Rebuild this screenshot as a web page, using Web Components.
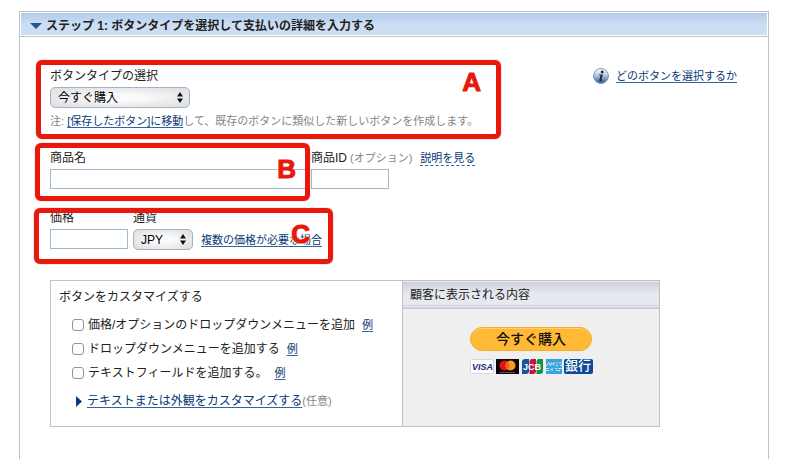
<!DOCTYPE html>
<html lang="ja">
<head>
<meta charset="utf-8">
<title>ボタンの作成</title>
<style>
    body {
        margin: 0;
        background: #fff;
        color: #222;
        font: 12px/16px "Liberation Sans", "Noto Sans CJK JP", sans-serif;
    }
</style>
</head>
<body>
<step-panel heading="ステップ 1: ボタンタイプを選択して支払いの詳細を入力する">
    <field-row mark="A" style="--mark-x:-14px; --mark-y:-8px; --mark-w:465px; --mark-h:79px; --letter-x:15px; --letter-y:5px">
        <select-field label="ボタンタイプの選択" options="今すぐ購入,カートに追加,寄付,購読" style="--width:140px">
            <note-text slot="note">注: <text-link>[保存したボタン]に移動</text-link>して、既存のボタンに類似した新しいボタンを作成します。</note-text>
        </select-field>
        <help-link slot="end">どのボタンを選択するか</help-link>
    </field-row>

    <field-row mark="B" style="--mark-x:-15px; --mark-y:-7px; --mark-w:275px; --mark-h:58px; --letter-x:9px; --letter-y:9px">
        <text-field label="商品名" style="--width:256px"></text-field>
        <text-field label="商品ID" style="--width:78px">
            <note-text slot="extra">(オプション)</note-text>
            <text-link slot="extra" dashed>説明を見る</text-link>
        </text-field>
    </field-row>

    <field-row mark="C" style="--mark-x:-16px; --mark-y:-2px; --mark-w:299px; --mark-h:56px; --letter-x:18px; --letter-y:9px">
        <text-field label="価格" style="--width:78px"></text-field>
        <select-field label="通貨" options="JPY,USD,EUR" style="--width:60px"></select-field>
        <text-link class="beside">複数の価格が必要な場合</text-link>
    </field-row>

    <customize-box heading="ボタンをカスタマイズする">
        <check-option label="価格/オプションのドロップダウンメニューを追加"></check-option>
        <check-option label="ドロップダウンメニューを追加する"></check-option>
        <check-option label="テキストフィールドを追加する。"></check-option>
        <button-preview slot="preview" heading="顧客に表示される内容"></button-preview>
    </customize-box>
</step-panel>

<script>
// every element gets its markup through here
function define(name, render) {
    customElements.define(name, class extends HTMLElement {
        constructor() {
            super();
            this.attachShadow({ mode: 'open' });
            const template = document.createElement('template');
            // trimmed, so inline elements leave no space behind them
            template.innerHTML = render(this).trim();
            this.shadowRoot.appendChild(template.content.cloneNode(true));
        }
    });
}

define('text-link', () => `
    <style>
        :host { display: inline; font-size: 11px; }
        a {
            color: #083772;
            text-decoration: underline 1px #2f65a3;
            text-underline-offset: 2px;
            text-decoration-skip-ink: none;
        }
        :host([dashed]) a { text-decoration-style: dashed; text-underline-offset: 3px; }
        :host([large]) { font-size: 12px; }
    </style><a href="#"><slot></slot></a>
`);

define('note-text', () => `
    <style>
        :host { display: inline; color: #858585; font-size: 11px; }
    </style><slot></slot>
`);

define('help-link', () => `
    <style>
        :host { display: flex; align-items: center; gap: 7px; }
        svg { display: block; }
    </style>
    <svg width="16" height="16" viewBox="0 0 16 16" aria-hidden="true">
        <defs>
            <linearGradient id="ball" x1="0" y1="0" x2="0" y2="1">
                <stop offset="0" stop-color="#fff"/>
                <stop offset=".45" stop-color="#b9cce0"/>
                <stop offset="1" stop-color="#2a5587"/>
            </linearGradient>
        </defs>
        <circle cx="8" cy="8" r="7.5" fill="url(#ball)" stroke="#7f9dbd"/>
        <circle cx="9.2" cy="4" r="1.4" fill="#1c2836"/>
        <path d="M6 6.400h3.900L8.500 11.600q-.1.700 1.200.1l-.2.700q-3.400 1.800-3.100-.5L7.400 7.300H5.800z" fill="#1c2836"/>
    </svg>
    <text-link><slot></slot></text-link>
`);

define('text-field', el => `
    <style>
        :host { display: flex; flex-direction: column; gap: 3px; width: var(--width); }
        .caption { display: flex; gap: 3px; white-space: nowrap; }
        ::slotted(text-link) { margin-left: 5px; }
        input {
            box-sizing: border-box;
            width: 100%;
            height: 20px;
            margin: 0;
            padding: 2px 4px;
            border: 1px solid #a0b8d0;
            border-radius: 0;
            background: #fff;
            font: inherit;
        }
    </style>
    <div class="caption"><label for="field">${el.getAttribute('label')}</label><slot name="extra"></slot></div>
    <input id="field" type="text">
`);

define('select-field', el => `
    <style>
        :host { display: flex; flex-direction: column; gap: 3px; }
        .control { display: grid; width: var(--width); }
        .control > * { grid-area: 1 / 1; }
        select {
            appearance: none;
            box-sizing: border-box;
            width: 100%;
            height: 21px;
            margin: 0;
            padding: 1px 18px 0 7px;
            border: 1px solid #9db4cd;
            border-radius: 5px;
            background: radial-gradient(ellipse at center, #fbfbfb 20%, #dcdcdc 100%);
            color: #000;
            font: 12px/18px "Liberation Sans", "Noto Sans CJK JP", sans-serif;
        }
        svg { place-self: center end; margin-right: 7px; pointer-events: none; }
        .note { margin-top: 2px; }
    </style>
    <label for="choice">${el.getAttribute('label')}</label>
    <div class="control">
        <select id="choice">
            ${el.getAttribute('options').split(',').map(o => `<option>${o}</option>`).join('')}
        </select>
        <svg width="6" height="11" viewBox="0 0 6 11" aria-hidden="true">
            <path d="M0 4.500L3 0l3 4.500zM0 6.500h6L3 11z" fill="#111"/>
        </svg>
    </div>
    <div class="note"><slot name="note"></slot></div>
`);

define('field-row', el => `
    <style>
        :host { display: flex; justify-content: space-between; position: relative; }
        .fields { display: flex; align-items: flex-start; gap: 5px; }
        ::slotted(.beside) { margin: 22px 0 0 3px; }
        ::slotted(help-link) { align-self: flex-start; }
        .mark {
            box-sizing: border-box;
            position: absolute;
            left: var(--mark-x);
            top: var(--mark-y);
            width: var(--mark-w);
            height: var(--mark-h);
            padding: var(--letter-y) var(--letter-x) 0 0;
            border: 5px solid #e8190c;
            border-radius: 6px;
            box-shadow: 0 0 1px #e8190c;
            color: #e8190c;
            font: bold 26px/24px "Liberation Sans", sans-serif;
            -webkit-text-stroke: 1px #e8190c;
            text-align: right;
            text-shadow: 0 0 2px #fff, 0 0 2px #fff, 0 0 2px #fff, 0 0 2px #fff;
            pointer-events: none;
        }
    </style>
    <div class="fields"><slot></slot></div>
    <slot name="end"></slot>
    <div class="mark">${el.getAttribute('mark')}</div>
`);

define('check-option', el => `
    <style>
        :host { display: flex; align-items: center; height: 24px; }
        input {
            appearance: none;
            box-sizing: border-box;
            width: 12px;
            height: 12px;
            margin: 0 4px 0 0;
            border: 1px solid #949494;
            border-radius: 3px;
            background: #fff;
        }
        input:checked { background: #2f65a3; }
        text-link { margin-left: 7px; }
    </style>
    <input id="check" type="checkbox">
    <label for="check">${el.getAttribute('label')}</label>
    <text-link>例</text-link>
`);

define('button-preview', el => `
    <style>
        :host { display: block; background: #efefef; }
        header {
            margin-top: 1px;
            padding: 5px 7px 2px;
            border-bottom: 1px solid #c9cedb;
            background: linear-gradient(#ccd0dc, #e6e9ef 50%);
        }
        .rule { height: 2px; margin-top: 1px; background: #c9cedb; }
        .sample { display: flex; flex-direction: column; align-items: center; gap: 8px; padding-top: 18px; }
        button {
            width: 122px;
            height: 24px;
            padding: 0;
            border: 1px solid #f3ad32;
            border-radius: 12px;
            background: #ffb934;
            box-shadow: inset 0 1px #ffd070;
            color: #111;
            font: 500 14px/22px "Liberation Sans", "Noto Sans CJK JP", sans-serif;
        }
        .cards { display: flex; gap: 2px; }
        svg { display: block; }
        .bank {
            width: 29px;
            height: 15px;
            border-radius: 2px;
            background: #0b4a96;
            color: #fff;
            font: 500 13px/14px "Liberation Sans", "Noto Sans CJK JP", sans-serif;
            text-align: center;
        }
        text { font-family: "Liberation Sans", sans-serif; font-weight: bold; }
    </style>
    <header>${el.getAttribute('heading')}</header>
    <div class="rule"></div>
    <div class="sample">
        <button type="button">今すぐ購入</button>
        <div class="cards">
            <svg width="24" height="15" viewBox="0 0 24 15">
                <rect x=".5" y=".5" width="23" height="14" rx="1.5" fill="#fff" stroke="#d5d5dc"/>
                <text x="2" y="11" font-size="9" font-style="italic" fill="#1c2b78">VISA</text>
            </svg>
            <svg width="23" height="15" viewBox="0 0 23 15">
                <rect width="23" height="15" fill="#0b0505"/>
                <circle cx="8.5" cy="6.5" r="5" fill="#e8101e"/>
                <circle cx="14.5" cy="6.5" r="5" fill="#f79b1c"/>
                <path d="M11.500 2.500a5 5 0 0 1 0 8a5 5 0 0 1 0-8z" fill="#f8601b"/>
                <path d="M4 13.500h15" stroke="#8a8585" stroke-dasharray="1 .6"/>
            </svg>
            <svg width="23" height="15" viewBox="0 0 23 15">
                <path d="M4 0h4v12q0 3-3 3H1V3q0-3 3-3z" fill="#15559f"/>
                <path d="M11 0h4v12q0 3-3 3H8.500V3q0-3 2.500-3z" fill="#cc1236"/>
                <path d="M18 0h4v12q0 3-3 3h-3.500V3q0-3 2.500-3z" fill="#159044"/>
                <text x="2" y="11" font-size="9" fill="#fff">JCB</text>
            </svg>
            <svg width="16" height="15" viewBox="0 0 16 15">
                <rect width="16" height="15" fill="#38a5dc"/>
                <path d="M0 6.500h1l1.500-3 1.500 3h1v-3l1.500 2 1.500-2v3M10 4h2M10 6.500h2M13 4h3M14 6.500h2M0 9.500h3M0 11.500h3M4.500 9.500l2.500 2M7 9.500l-2.500 2M9 9.500h2M12 9.500h4M10 11.500h4" fill="none" stroke="#cfe9f7" stroke-width=".9"/>
            </svg>
            <div class="bank">銀行</div>
        </div>
    </div>
`);

define('customize-box', el => `
    <style>
        :host {
            display: grid;
            grid-template-columns: 352px 1fr;
            box-sizing: border-box;
            min-height: 147px;
            max-width: 610px;
            border: 1px solid #c1c1c1;
        }
        .options { padding: 8px 8px 15px; border-right: 1px solid #c1c1c1; }
        .list { display: flex; flex-direction: column; padding: 8px 0 0 13px; }
        .more { display: flex; align-items: center; padding: 8px 0 0 4px; }
        .more svg { margin-right: 5px; }
        ::slotted(button-preview) { grid-column: 2; }
    </style>
    <div class="options">
        <div>${el.getAttribute('heading')}</div>
        <div class="list">
            <slot></slot>
            <div class="more">
                <svg width="6" height="11" viewBox="0 0 6 11" aria-hidden="true"><path d="M0 0l6 5.500L0 11z" fill="#063c7c"/></svg>
                <text-link large>テキストまたは外観をカスタマイズする</text-link>
                <note-text>(任意)</note-text>
            </div>
        </div>
    </div>
    <slot name="preview"></slot>
`);

define('step-panel', el => `
    <style>
        :host { display: block; padding: 11px 29px 0 19px; }
        section {
            box-sizing: border-box;
            min-height: calc(100vh - 11px);
            border: 1px solid #c1c1c1;
            border-bottom: 0;
        }
        header { padding: 1px; border-bottom: 1px solid #c1c1c1; }
        h2 {
            display: flex;
            align-items: center;
            gap: 4px;
            box-sizing: border-box;
            height: 22px;
            margin: 0;
            padding: 3px 0 0 9px;
            background: linear-gradient(#b0cbea, #cbdef3 50%);
            font-size: 12px;
        }
        .body { display: flex; flex-direction: column; padding: 31px 31px 32px 30px; }
        ::slotted(field-row) { min-height: 60px; }
        ::slotted(field-row[mark="A"]) { min-height: 82px; }
        ::slotted(customize-box) { margin-top: 10px; }
    </style>
    <section>
        <header>
            <h2>
                <svg width="12" height="6" viewBox="0 0 12 6" aria-hidden="true"><path d="M0 0h12L6 6z" fill="#215590"/></svg>
                ${el.getAttribute('heading')}
            </h2>
        </header>
        <div class="body"><slot></slot></div>
    </section>
`);
</script>
</body>
</html>
